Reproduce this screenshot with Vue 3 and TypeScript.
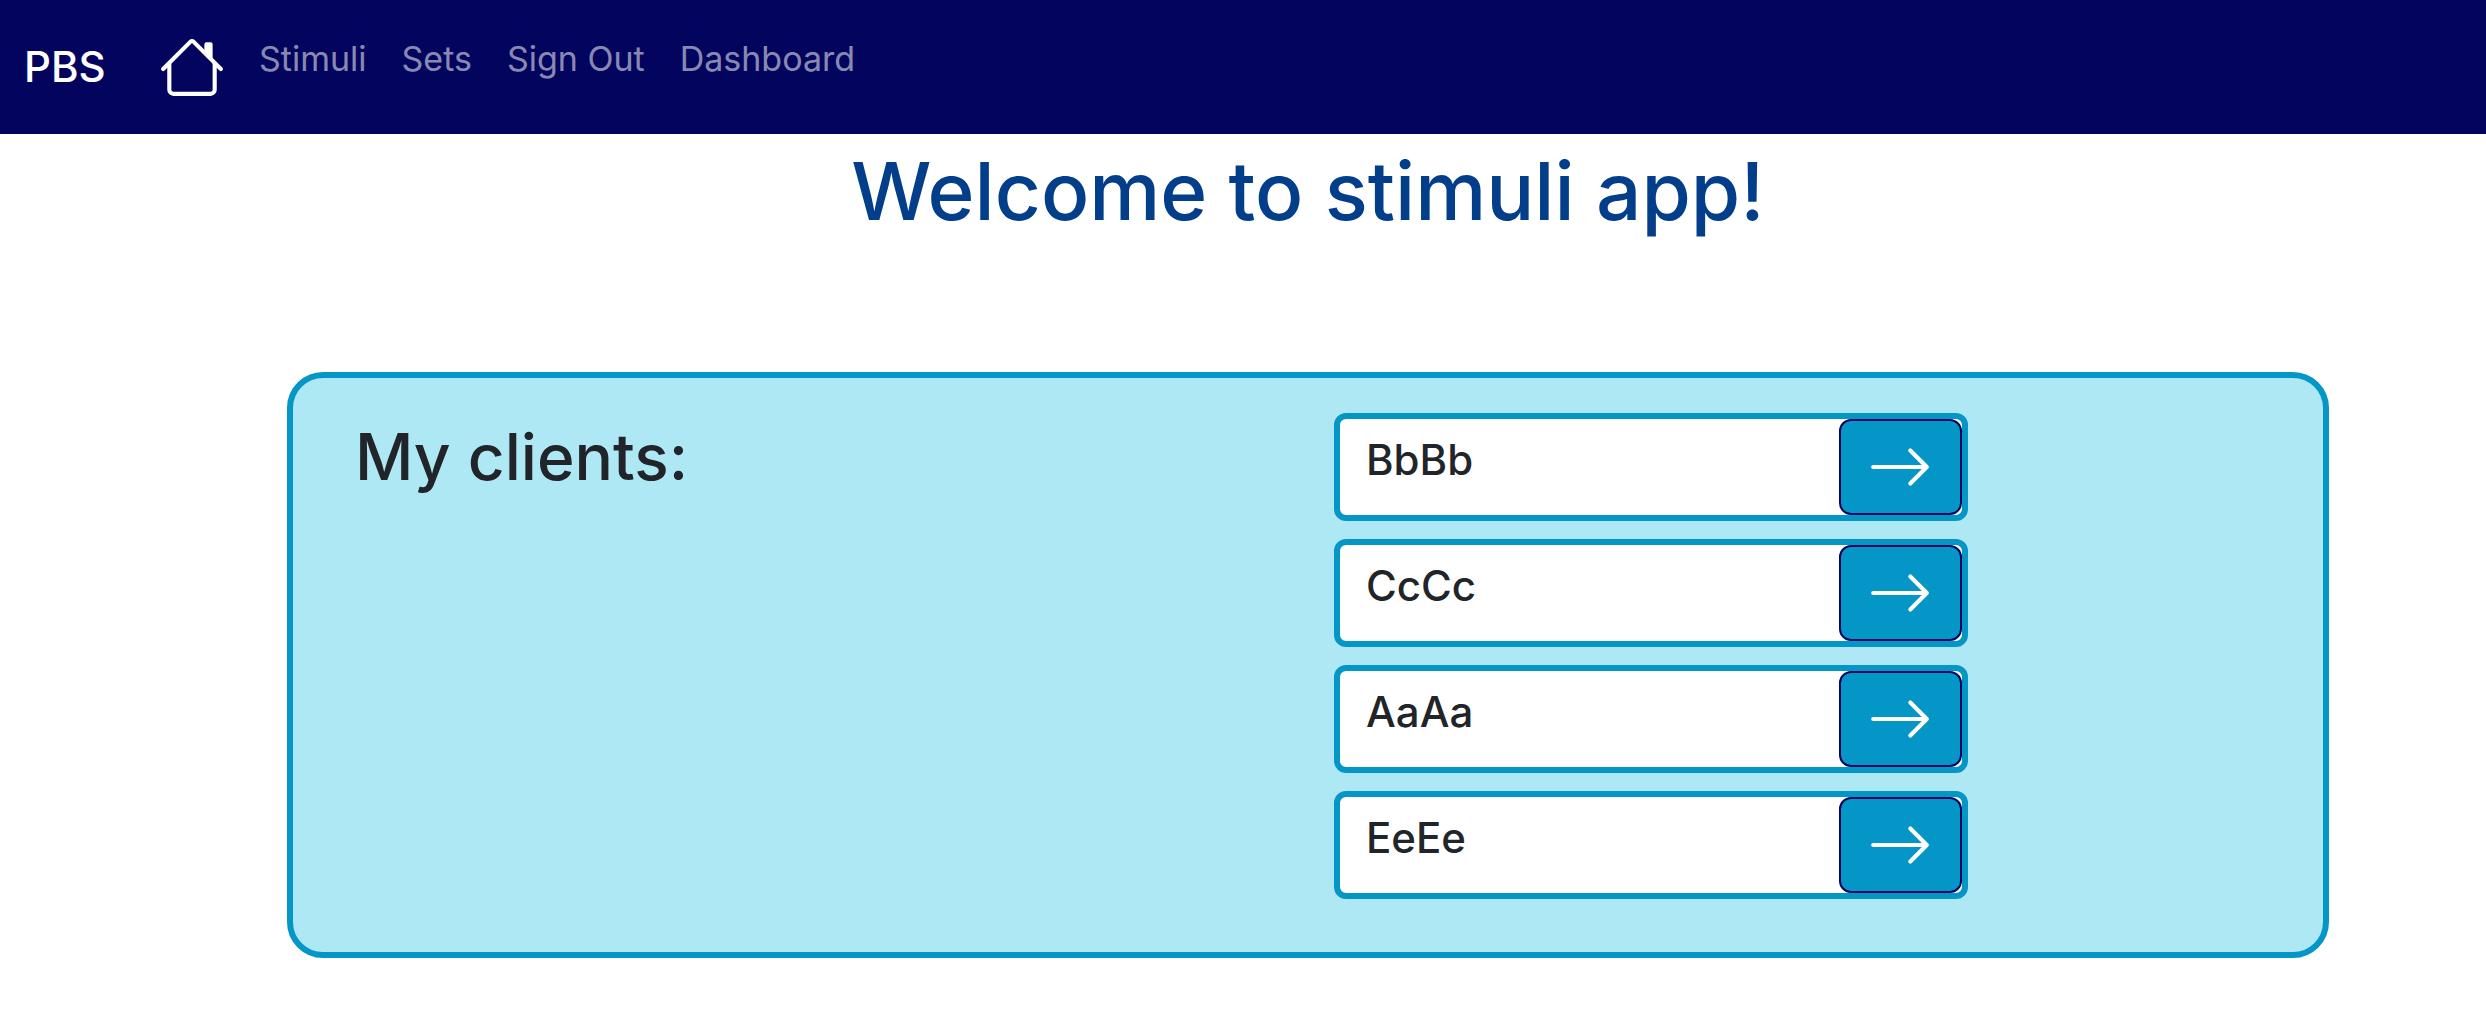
<script setup lang="ts">
interface NavLink {
  label: string
  href: string
}

interface Client {
  id: number
  name: string
}

const links: NavLink[] = [
  { label: 'Stimuli', href: '#stimuli' },
  { label: 'Sets', href: '#sets' },
  { label: 'Sign Out', href: '#sign-out' },
  { label: 'Dashboard', href: '#dashboard' },
]

const clients: Client[] = [
  { id: 1, name: 'BbBb' },
  { id: 2, name: 'CcCc' },
  { id: 3, name: 'AaAa' },
  { id: 4, name: 'EeEe' },
]
</script>

<template>
  <div class="page">
    <nav class="navbar">
      <a class="brand" href="#">PBS</a>
      <a class="home" href="#home" aria-label="Home">
        <svg class="icon" viewBox="0 0 16 16" aria-hidden="true">
          <path fill-rule="evenodd" d="M2 13.5V7h1v6.5a.5.5 0 0 0 .5.5h9a.5.5 0 0 0 .5-.5V7h1v6.5a1.5 1.5 0 0 1-1.5 1.5h-9A1.5 1.5 0 0 1 2 13.5zm11-11V6l-2-2V2.5a.5.5 0 0 1 .5-.5h1a.5.5 0 0 1 .5.5z" />
          <path fill-rule="evenodd" d="M7.293 1.5a1 1 0 0 1 1.414 0l6.647 6.646a.5.5 0 0 1-.708.708L8 2.207 1.354 8.854a.5.5 0 1 1-.708-.708L7.293 1.5z" />
        </svg>
      </a>
      <ul class="links">
        <li v-for="link in links" :key="link.href">
          <a class="link" :href="link.href">{{ link.label }}</a>
        </li>
      </ul>
    </nav>

    <main class="content">
      <h1 class="title">Welcome to stimuli app!</h1>
      <section class="panel">
        <h2 class="heading">My clients:</h2>
        <ul class="clients">
          <li v-for="client in clients" :key="client.id" class="client">
            <h3 class="name">{{ client.name }}</h3>
            <button class="open" type="button" :aria-label="`Open ${client.name}`">
              <svg class="icon" viewBox="0 0 16 16" aria-hidden="true">
                <path fill-rule="evenodd" d="M1 8a.5.5 0 0 1 .5-.5h11.793l-3.147-3.146a.5.5 0 0 1 .708-.708l4 4a.5.5 0 0 1 0 .708l-4 4a.5.5 0 0 1-.708-.708L13.293 8.5H1.5A.5.5 0 0 1 1 8z" />
              </svg>
            </button>
          </li>
        </ul>
      </section>
    </main>
  </div>
</template>

<style>
body {
  margin: 0;
  background: #fff;
}
</style>

<style scoped>
.page {
  font-family: Inter, "Liberation Sans", sans-serif;
  color: #212529;
}

.navbar {
  display: flex;
  align-items: center;
  box-sizing: border-box;
  height: 134px;
  padding: 0 24px;
  background: #03045e;
}

.brand {
  width: 135px;
  color: #fff;
  font-size: 42px;
  font-weight: 500;
  line-height: 66px;
  text-decoration: none;
}

.home {
  display: flex;
  color: #fff;
}

.icon {
  display: block;
  width: 66px;
  height: 66px;
  fill: currentColor;
}

.links {
  display: flex;
  gap: 35px;
  margin: 0 0 16px 34px;
  padding: 0;
  list-style: none;
}

.link {
  color: rgba(255, 255, 255, 0.55);
  font-size: 34px;
  line-height: 54px;
  text-decoration: none;
}

.content {
  padding: 0 157px 64px 287px;
}

.title {
  margin: 6px 0 130px;
  color: #023e8a;
  font-size: 80px;
  font-weight: 500;
  line-height: 102px;
  text-align: center;
}

.panel {
  display: grid;
  grid-template-columns: 1fr 1fr;
  padding: 35px 66px 53px 62px;
  border: 6px solid #0496c7;
  border-radius: 36px;
  background: #ade8f4;
}

.heading {
  margin: 0;
  font-size: 64px;
  font-weight: 500;
  line-height: 88px;
}

.clients {
  display: flex;
  flex-direction: column;
  gap: 18px;
  width: calc(100% * 2 / 3);
  margin: 0 0 0 28px;
  padding: 0;
  list-style: none;
}

.client {
  display: flex;
  justify-content: space-between;
  border: 6px solid #0496c7;
  border-radius: 12px;
  background: #fff;
}

.name {
  margin: 0 0 0 26px;
  font-size: 42px;
  font-weight: 500;
  line-height: 82px;
}

.open {
  display: flex;
  align-items: center;
  justify-content: center;
  box-sizing: border-box;
  width: 123px;
  height: 96px;
  padding: 0;
  border: 2px solid #03045e;
  border-radius: 12px;
  background: #0496c7;
  color: #fff;
}
</style>
